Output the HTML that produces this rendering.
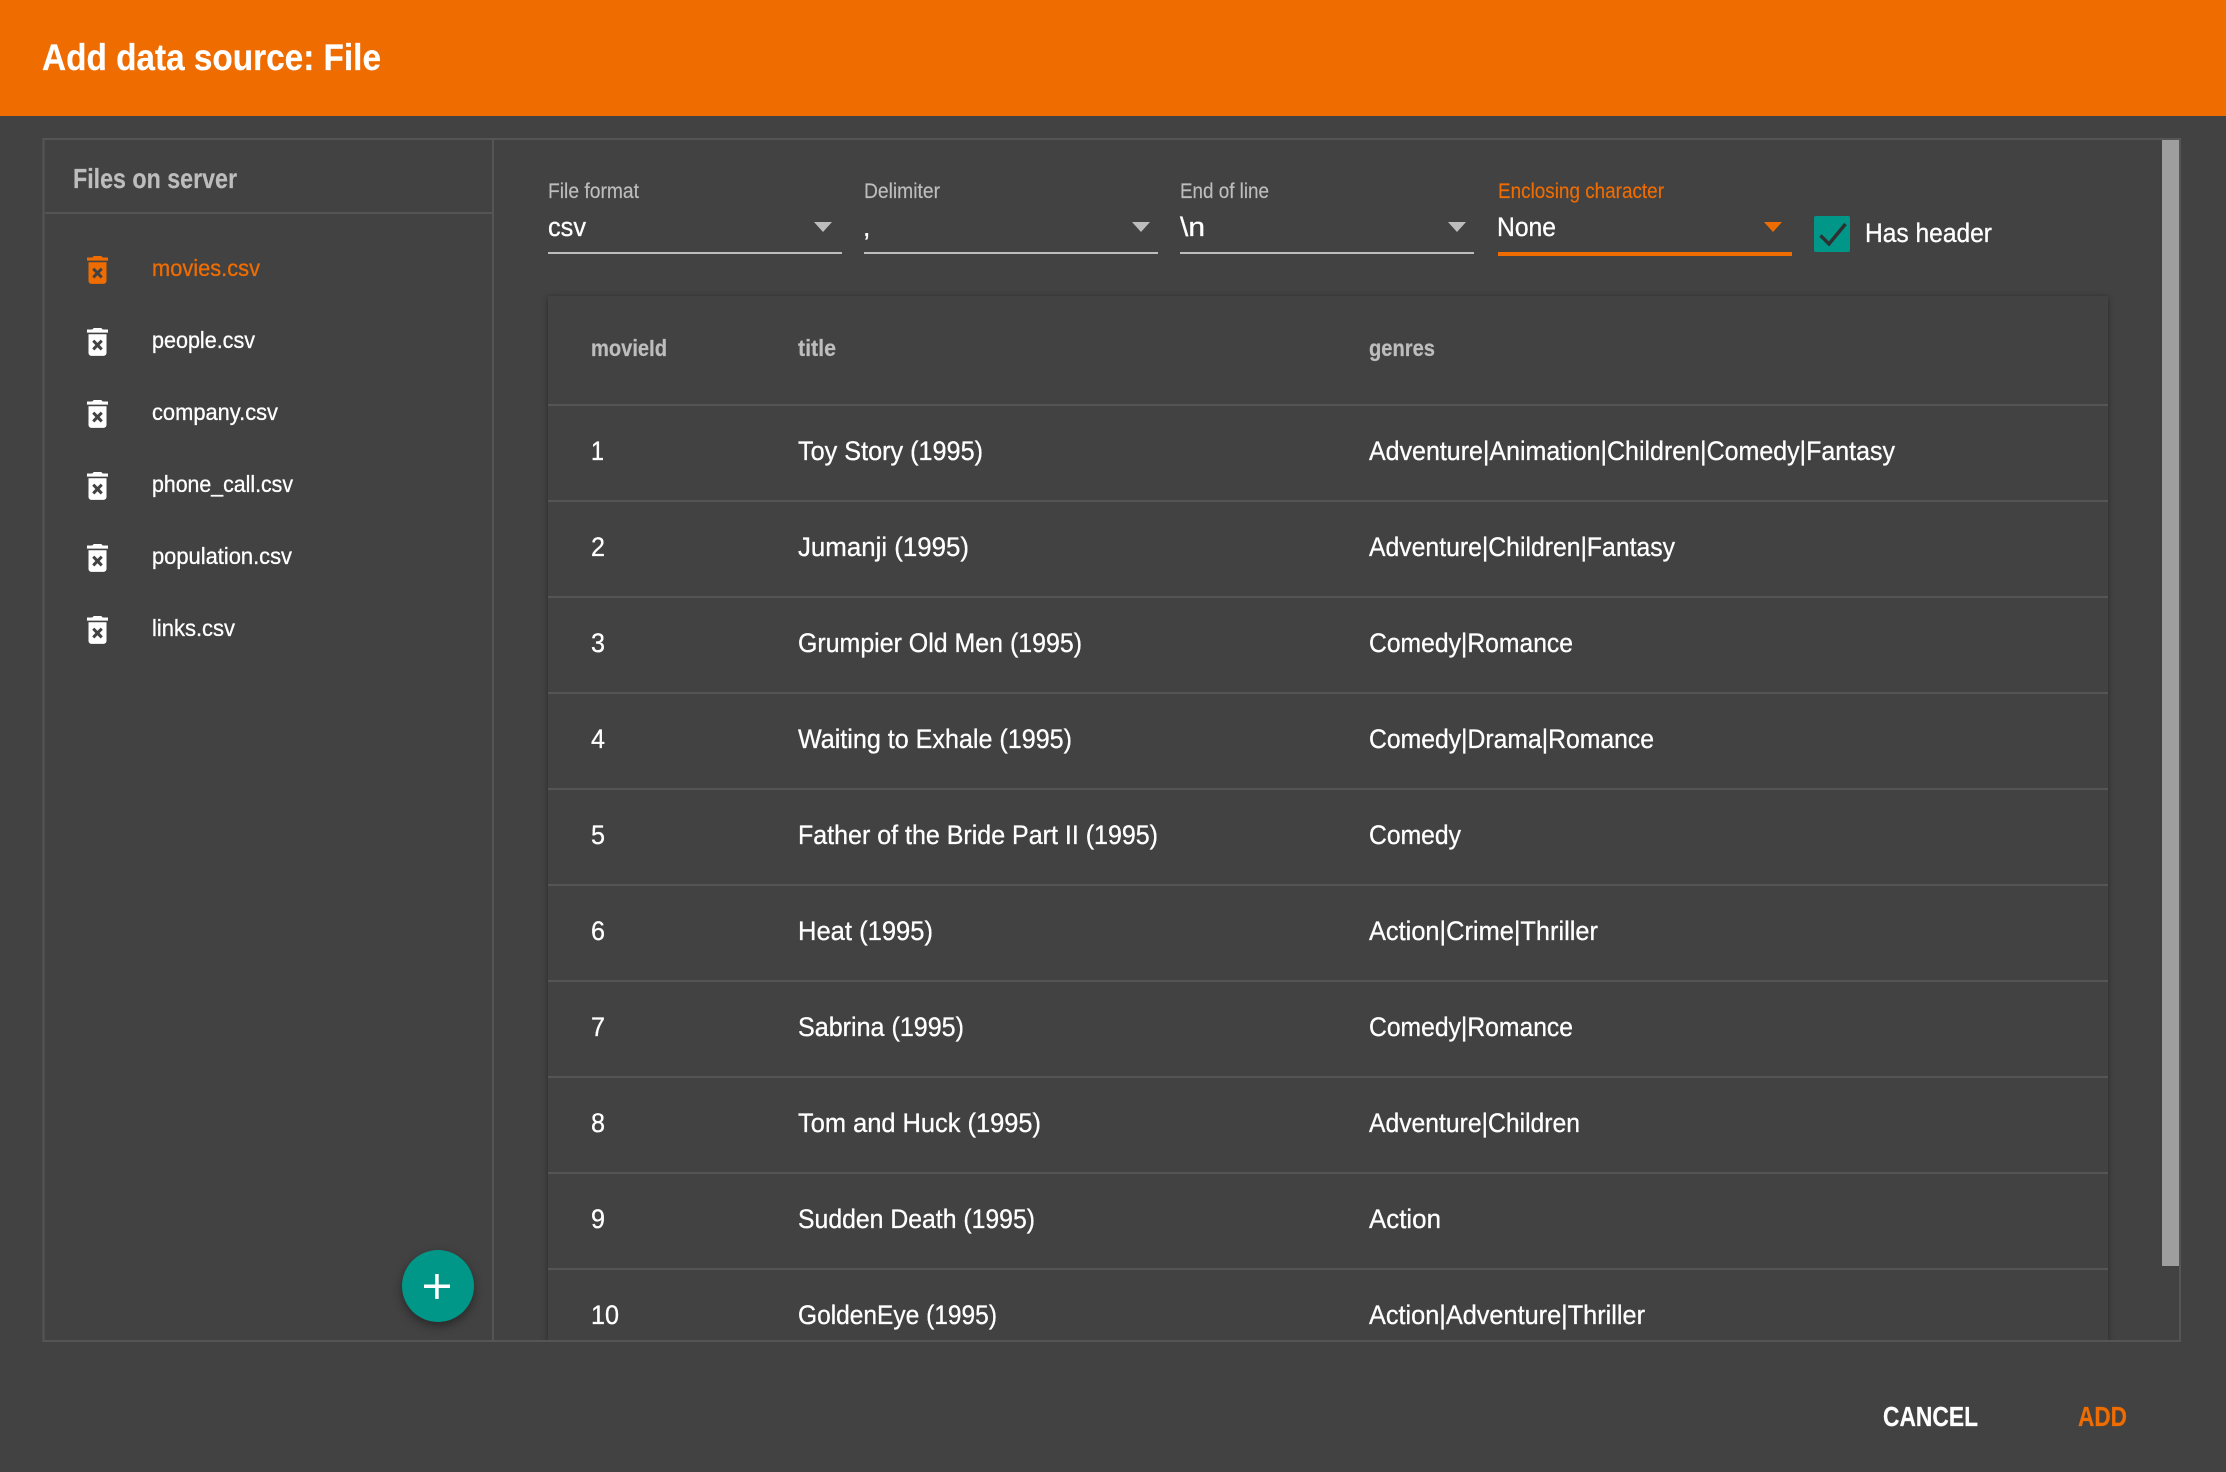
<!DOCTYPE html>
<html><head><meta charset="utf-8"><title>Add data source: File</title>
<style>
html,body{margin:0;padding:0;background:#424242;width:2226px;height:1472px;overflow:hidden}
#clip{position:absolute;left:45px;top:140px;width:2133px;height:1200px;overflow:hidden}
#card{position:absolute;left:503px;top:156px;width:1560px;height:1200px;background:#424242;box-shadow:0 2px 6px rgba(0,0,0,.28),0 0 3px rgba(0,0,0,.12)}
#fab{position:absolute;left:402px;top:1250px;width:72px;height:72px;border-radius:50%;background:#009688;box-shadow:0 4px 10px rgba(0,0,0,.4)}
svg{position:absolute;left:0;top:0}
text{font-family:"Liberation Sans",sans-serif;fill:#fff;font-size:26.5px;stroke:#fff;stroke-width:.3px}
.b{font-weight:bold;stroke-width:.2px}
.g{fill:#bdbdbd;stroke:#bdbdbd}
.o{fill:#ef6c00;stroke:#ef6c00}
.l{font-size:21px;fill:#bdbdbd;stroke:#bdbdbd;stroke-width:.15px}
.f{font-size:23px}
.h{font-size:23px;font-weight:bold;fill:#bdbdbd;stroke:#bdbdbd;stroke-width:.2px}
.ln{fill:#555}
</style></head>
<body>
<div id="clip"><div id="card"></div></div>
<div id="fab"></div>
<svg width="2226" height="1472" viewBox="0 0 2226 1472" xmlns="http://www.w3.org/2000/svg">
<defs><path id="tr" d="M6 19c0 1.100.9 2 2 2h8c1.100 0 2-.9 2-2V7H6v12zm2.460-7.120l1.410-1.410L12 12.590l2.120-2.120 1.410 1.410L13.410 14l2.120 2.120-1.410 1.410L12 15.410l-2.120 2.120-1.410-1.410L10.590 14l-2.130-2.120zM15.500 4l-1-1h-5l-1 1H5v2h14V4z"/></defs>
<rect x="0" y="0" width="2226" height="116" fill="#ef6c00"/>
<text x="42" y="70" class="b" style="font-size:37.5px" textLength="339" lengthAdjust="spacingAndGlyphs">Add data source: File</text>

<!-- panel borders -->
<rect x="42.500" y="138" width="2138.500" height="2" class="ln"/>
<rect x="42.500" y="1340" width="2138.500" height="2" class="ln"/>
<rect x="42.500" y="138" width="2" height="1204" class="ln"/>
<rect x="2179" y="138" width="2" height="1204" class="ln"/>
<rect x="492" y="140" width="2" height="1200" class="ln"/>
<rect x="45" y="212" width="447" height="2" class="ln"/>
<rect x="2162" y="140" width="17" height="1126" fill="#9e9e9e"/>

<!-- sidebar -->
<text x="73" y="188" class="b g" style="font-size:27.500px" textLength="164" lengthAdjust="spacingAndGlyphs">Files on server</text>
<use href="#tr" fill="#ef6c00" transform="translate(79.500 251.350) scale(1.500 1.550)"/>
<text x="152" y="276" class="f o" textLength="108" lengthAdjust="spacingAndGlyphs">movies.csv</text>
<use href="#tr" fill="#fff" transform="translate(79.500 323.350) scale(1.500 1.550)"/>
<text x="152" y="348" class="f" textLength="103" lengthAdjust="spacingAndGlyphs">people.csv</text>
<use href="#tr" fill="#fff" transform="translate(79.500 395.350) scale(1.500 1.550)"/>
<text x="152" y="420" class="f" textLength="126" lengthAdjust="spacingAndGlyphs">company.csv</text>
<use href="#tr" fill="#fff" transform="translate(79.500 467.350) scale(1.500 1.550)"/>
<text x="152" y="492" class="f" textLength="141" lengthAdjust="spacingAndGlyphs">phone_call.csv</text>
<use href="#tr" fill="#fff" transform="translate(79.500 539.350) scale(1.500 1.550)"/>
<text x="152" y="564" class="f" textLength="140" lengthAdjust="spacingAndGlyphs">population.csv</text>
<use href="#tr" fill="#fff" transform="translate(79.500 611.350) scale(1.500 1.550)"/>
<text x="152" y="636" class="f" textLength="83" lengthAdjust="spacingAndGlyphs">links.csv</text>

<!-- fab plus -->
<rect x="424" y="1284.500" width="26" height="3.500" fill="#fff"/>
<rect x="435.200" y="1274" width="3.500" height="25" fill="#fff"/>

<!-- selects -->
<text x="548" y="198" class="l" textLength="91" lengthAdjust="spacingAndGlyphs">File format</text>
<text x="548" y="236" textLength="38" lengthAdjust="spacingAndGlyphs">csv</text>
<rect x="548" y="252" width="294" height="2" fill="#bdbdbd"/>
<polygon points="814,222 832,222 823,232" fill="#bdbdbd"/>

<text x="864" y="198" class="l" textLength="76" lengthAdjust="spacingAndGlyphs">Delimiter</text>
<text x="863" y="236">,</text>
<rect x="864" y="252" width="294" height="2" fill="#bdbdbd"/>
<polygon points="1132,222 1150,222 1141,232" fill="#bdbdbd"/>

<text x="1180" y="198" class="l" textLength="89" lengthAdjust="spacingAndGlyphs">End of line</text>
<text x="1180" y="236" textLength="25" lengthAdjust="spacingAndGlyphs">\n</text>
<rect x="1180" y="252" width="294" height="2" fill="#bdbdbd"/>
<polygon points="1448,222 1466,222 1457,232" fill="#bdbdbd"/>

<text x="1498" y="198" class="l o" style="fill:#ef6c00;stroke:#ef6c00" textLength="166" lengthAdjust="spacingAndGlyphs">Enclosing character</text>
<text x="1497" y="236" textLength="59" lengthAdjust="spacingAndGlyphs">None</text>
<rect x="1498" y="252" width="294" height="4" fill="#ef6c00"/>
<polygon points="1764,222 1782,222 1773,232" fill="#ef6c00"/>

<rect x="1814" y="216" width="36" height="36" rx="2" fill="#009688"/>
<path d="M1820.500 235.500L1829 244L1845.500 224" fill="none" stroke="#303030" stroke-width="3.400"/>
<text x="1865" y="242" textLength="127" lengthAdjust="spacingAndGlyphs">Has header</text>

<!-- table head -->
<text x="591" y="356" class="h" textLength="76" lengthAdjust="spacingAndGlyphs">movieId</text>
<text x="798" y="356" class="h" textLength="38" lengthAdjust="spacingAndGlyphs">title</text>
<text x="1369" y="356" class="h" textLength="66" lengthAdjust="spacingAndGlyphs">genres</text>

<!-- row lines -->
<rect x="548" y="404" width="1560" height="2" class="ln"/>
<rect x="548" y="500" width="1560" height="2" class="ln"/>
<rect x="548" y="596" width="1560" height="2" class="ln"/>
<rect x="548" y="692" width="1560" height="2" class="ln"/>
<rect x="548" y="788" width="1560" height="2" class="ln"/>
<rect x="548" y="884" width="1560" height="2" class="ln"/>
<rect x="548" y="980" width="1560" height="2" class="ln"/>
<rect x="548" y="1076" width="1560" height="2" class="ln"/>
<rect x="548" y="1172" width="1560" height="2" class="ln"/>
<rect x="548" y="1268" width="1560" height="2" class="ln"/>

<!-- rows -->
<text x="591" y="460" textLength="13" lengthAdjust="spacingAndGlyphs">1</text>
<text x="798" y="460" textLength="185" lengthAdjust="spacingAndGlyphs">Toy Story (1995)</text>
<text x="1369" y="460" textLength="526" lengthAdjust="spacingAndGlyphs">Adventure|Animation|Children|Comedy|Fantasy</text>

<text x="591" y="556" textLength="14" lengthAdjust="spacingAndGlyphs">2</text>
<text x="798" y="556" textLength="171" lengthAdjust="spacingAndGlyphs">Jumanji (1995)</text>
<text x="1369" y="556" textLength="306" lengthAdjust="spacingAndGlyphs">Adventure|Children|Fantasy</text>

<text x="591" y="652" textLength="14" lengthAdjust="spacingAndGlyphs">3</text>
<text x="798" y="652" textLength="284" lengthAdjust="spacingAndGlyphs">Grumpier Old Men (1995)</text>
<text x="1369" y="652" textLength="204" lengthAdjust="spacingAndGlyphs">Comedy|Romance</text>

<text x="591" y="748" textLength="14" lengthAdjust="spacingAndGlyphs">4</text>
<text x="798" y="748" textLength="274" lengthAdjust="spacingAndGlyphs">Waiting to Exhale (1995)</text>
<text x="1369" y="748" textLength="285" lengthAdjust="spacingAndGlyphs">Comedy|Drama|Romance</text>

<text x="591" y="844" textLength="14" lengthAdjust="spacingAndGlyphs">5</text>
<text x="798" y="844" textLength="360" lengthAdjust="spacingAndGlyphs">Father of the Bride Part II (1995)</text>
<text x="1369" y="844" textLength="92" lengthAdjust="spacingAndGlyphs">Comedy</text>

<text x="591" y="940" textLength="14" lengthAdjust="spacingAndGlyphs">6</text>
<text x="798" y="940" textLength="135" lengthAdjust="spacingAndGlyphs">Heat (1995)</text>
<text x="1369" y="940" textLength="229" lengthAdjust="spacingAndGlyphs">Action|Crime|Thriller</text>

<text x="591" y="1036" textLength="14" lengthAdjust="spacingAndGlyphs">7</text>
<text x="798" y="1036" textLength="166" lengthAdjust="spacingAndGlyphs">Sabrina (1995)</text>
<text x="1369" y="1036" textLength="204" lengthAdjust="spacingAndGlyphs">Comedy|Romance</text>

<text x="591" y="1132" textLength="14" lengthAdjust="spacingAndGlyphs">8</text>
<text x="798" y="1132" textLength="243" lengthAdjust="spacingAndGlyphs">Tom and Huck (1995)</text>
<text x="1369" y="1132" textLength="211" lengthAdjust="spacingAndGlyphs">Adventure|Children</text>

<text x="591" y="1228" textLength="14" lengthAdjust="spacingAndGlyphs">9</text>
<text x="798" y="1228" textLength="237" lengthAdjust="spacingAndGlyphs">Sudden Death (1995)</text>
<text x="1369" y="1228" textLength="72" lengthAdjust="spacingAndGlyphs">Action</text>

<text x="591" y="1324" textLength="28" lengthAdjust="spacingAndGlyphs">10</text>
<text x="798" y="1324" textLength="199" lengthAdjust="spacingAndGlyphs">GoldenEye (1995)</text>
<text x="1369" y="1324" textLength="276" lengthAdjust="spacingAndGlyphs">Action|Adventure|Thriller</text>

<!-- footer -->
<text x="1883" y="1426" class="b" style="font-size:28px" textLength="95" lengthAdjust="spacingAndGlyphs">CANCEL</text>
<text x="2078" y="1426" class="b o" style="font-size:28px" textLength="49" lengthAdjust="spacingAndGlyphs">ADD</text>
</svg>
</body></html>
